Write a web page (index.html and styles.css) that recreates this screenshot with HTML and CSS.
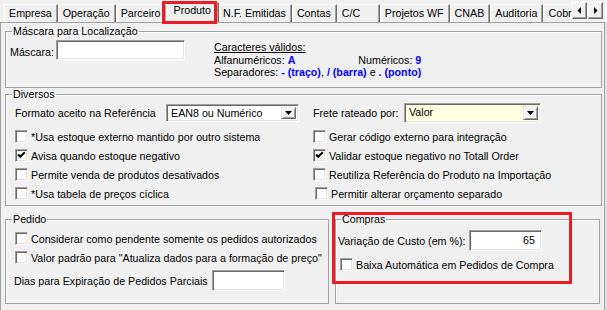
FILE: index.html
```html
<!DOCTYPE html>
<html lang="pt-BR">
<head>
    <meta charset="UTF-8">
    <title>Produto - Parâmetros</title>
    <link rel="stylesheet" href="styles.css">
</head>
<body>
    <div class="tabctl">
        <div class="tabbar">
            <div class="tabs">
                <span class="tab">Empresa</span>
                <span class="tab">Operação</span>
                <span class="tab">Parceiro</span>
                <span class="tab active">Produto</span>
                <span class="tab">N.F. Emitidas</span>
                <span class="tab">Contas</span>
                <span class="tab tab-cc">C/C</span>
                <span class="tab">Projetos WF</span>
                <span class="tab">CNAB</span>
                <span class="tab">Auditoria</span>
                <span class="tab">Cobrança</span>
            </div>
            <div class="scroll">
                <span class="sbtn">
                    <svg width="5" height="7" viewBox="0 0 5 7"><path d="M4 0 L4 7 L0.5 3.5 Z" fill="#000"/></svg>
                </span>
                <span class="sbtn">
                    <svg width="5" height="7" viewBox="0 0 5 7"><path d="M1 0 L1 7 L4.5 3.5 Z" fill="#000"/></svg>
                </span>
            </div>
        </div>

        <div class="page">
            <fieldset class="group mask">
                <legend>Máscara para Localização</legend>
                <div class="mask-row">
                    <label class="mask-label">Máscara:</label>
                    <span class="edit mask-edit"></span>
                    <div class="chars">
                        <div class="chars-title">Caracteres válidos:</div>
                        <div class="chars-line">
                            <span>Alfanuméricos: <b>A</b></span>
                            <span>Numéricos: <b>9</b></span>
                        </div>
                        <div>Separadores: <b>- (traço)</b>, <b>/ (barra)</b> e <b>. (ponto)</b></div>
                    </div>
                </div>
            </fieldset>

            <fieldset class="group misc">
                <legend>Diversos</legend>
                <div class="cols">
                    <div class="col col-left">
                        <div class="field-row">
                            <span class="lbl lbl-format">Formato aceito na Referência</span>
                            <span class="combo combo-format">
                                <span class="combo-text">EAN8 ou Numérico</span>
                                <span class="combo-btn"><svg width="7" height="4" viewBox="0 0 7 4"><path d="M0 0 H7 L3.5 4 Z" fill="#000"/></svg></span>
                            </span>
                        </div>
                        <div class="check-row"><span class="check"></span>*Usa estoque externo mantido por outro sistema</div>
                        <div class="check-row"><span class="check on"><svg width="11" height="11" viewBox="0 0 11 11"><path d="M2 4.5 L4.2 6.8 L8.8 2.2" fill="none" stroke="#000" stroke-width="2"/></svg></span>Avisa quando estoque negativo</div>
                        <div class="check-row"><span class="check"></span>Permite venda de produtos desativados</div>
                        <div class="check-row"><span class="check"></span>*Usa tabela de preços cíclica</div>
                    </div>
                    <div class="col col-right">
                        <div class="field-row">
                            <span class="lbl lbl-freight">Frete rateado por:</span>
                            <span class="combo combo-freight">
                                <span class="combo-text">Valor</span>
                                <span class="combo-btn"><svg width="7" height="4" viewBox="0 0 7 4"><path d="M0 0 H7 L3.5 4 Z" fill="#000"/></svg></span>
                            </span>
                        </div>
                        <div class="check-row"><span class="check"></span>Gerar código externo para integração</div>
                        <div class="check-row"><span class="check on"><svg width="11" height="11" viewBox="0 0 11 11"><path d="M2 4.5 L4.2 6.8 L8.8 2.2" fill="none" stroke="#000" stroke-width="2"/></svg></span>Validar estoque negativo no Totall Order</div>
                        <div class="check-row"><span class="check"></span>Reutiliza Referência do Produto na Importação</div>
                        <div class="check-row nudge"><span class="check"></span>Permitir alterar orçamento separado</div>
                    </div>
                </div>
            </fieldset>

            <div class="bottom">
                <fieldset class="group order">
                    <legend>Pedido</legend>
                    <div class="check-row"><span class="check"></span>Considerar como pendente somente os pedidos autorizados</div>
                    <div class="check-row"><span class="check"></span>Valor padrão para "Atualiza dados para a formação de preço"</div>
                    <div class="days-row">
                        <span class="lbl lbl-days">Dias para Expiração de Pedidos Parciais</span>
                        <span class="edit days-edit"></span>
                    </div>
                </fieldset>

                <fieldset class="group purchase">
                    <legend>Compras</legend>
                    <div class="cost-row">
                        <span class="lbl lbl-cost">Variação de Custo (em %):</span>
                        <span class="edit cost-edit">65</span>
                    </div>
                    <div class="check-row"><span class="check"></span>Baixa Automática em Pedidos de Compra</div>
                </fieldset>
            </div>
        </div>
    </div>

    <!-- highlight boxes drawn over the form -->
    <div class="mark mark-tab"></div>
    <div class="mark mark-purchase"></div>
</body>
</html>
```

FILE: styles.css
```css
:root {
    --face: #f0f0f0;
    --shadow: #a0a0a0;
    --dark: #696969;
    --light: #e3e3e3;
    --white: #ffffff;
    --blue: #0000ff;
    --mark: #ed1c24;
}

* {
    box-sizing: border-box;
}

body {
    margin: 0;
    width: 607px;
    height: 310px;
    overflow: hidden;
    position: relative;
    background-color: var(--white);
    font-family: "Liberation Sans", Arial, sans-serif;
    font-size: 10.7px;
    color: #000;
}

/* tab strip */
.tabctl {
    width: 605px;
    height: 310px;
    background-color: var(--face);
}

.tabbar {
    display: flex;
    height: 22px;
    padding-left: 4px;
}

.tabs {
    flex: 1;
    display: flex;
    align-items: flex-end;
    overflow: hidden;
    white-space: nowrap;
}

.tab {
    height: 18px;
    line-height: 16px;
    padding: 0 5px 0 4px;
    border-top: 1px solid var(--white);
    border-left: 1px solid var(--white);
    border-right: 1px solid var(--dark);
    box-shadow: inset -1px 0 0 var(--shadow);
    flex-shrink: 0;
}

.tab.active {
    height: 20px;
    line-height: 15px;
    margin: 0 -1px 0 -1px;
    padding: 0 7px;
    position: relative;
}

.tab-cc {
    width: 43px;
}

.scroll {
    display: flex;
    gap: 1px;
    padding: 2px 2px 0 0;
}

.sbtn {
    width: 15px;
    height: 17px;
    display: flex;
    align-items: center;
    justify-content: center;
    background-color: var(--face);
    border: 1px solid;
    border-color: var(--white) var(--dark) var(--dark) var(--white);
    box-shadow: inset -1px -1px 0 var(--shadow);
}

/* page */
.page {
    height: 288px;
    border-top: 1px solid var(--shadow);
    border-left: 1px solid var(--shadow);
    border-right: 1px solid var(--shadow);
    box-shadow: 2px 0 0 var(--light);
    padding: 2px 2px 0 4px;
}

fieldset.group {
    margin: 0;
    padding: 0;
    min-width: 0;
    border: 1px solid var(--shadow);
    box-shadow: inset 1px 1px 0 var(--white);
}

legend {
    padding: 0 1px;
    margin-left: 6px;
    line-height: 13px;
}

.lbl {
    white-space: nowrap;
    flex-shrink: 0;
}

/* mascara */
.mask {
    height: 63px;
}

.mask-row {
    display: flex;
    align-items: flex-start;
    padding: 2px 0 0 4px;
}

.mask-label {
    width: 46px;
    margin-top: 6px;
}

.edit {
    display: block;
    flex-shrink: 0;
    background-color: var(--white);
    border: 1px solid;
    border-color: var(--shadow) var(--white) var(--white) var(--shadow);
    box-shadow: inset 1px 1px 0 var(--dark), inset -1px -1px 0 var(--light);
}

.mask-edit {
    width: 129px;
    height: 20px;
}

.chars {
    margin-left: 29px;
    margin-top: 1px;
    line-height: 12.5px;
}

.chars-title {
    text-decoration: underline;
}

.chars-line {
    display: flex;
    justify-content: space-between;
}

.chars b {
    color: var(--blue);
}

/* diversos */
.misc {
    margin-top: 2px;
    height: 118px;
}

.cols {
    display: flex;
    padding: 2px 0 0 9px;
}

.col-left {
    width: 298px;
}

.field-row {
    display: flex;
    align-items: center;
    height: 20px;
    margin-bottom: 4px;
}

.lbl-format {
    width: 151px;
}

.lbl-freight {
    width: 91px;
}

.combo {
    display: flex;
    height: 19px;
    background-color: var(--white);
    border: 1px solid;
    border-color: var(--shadow) var(--white) var(--white) var(--shadow);
    box-shadow: inset 1px 1px 0 var(--dark), inset -1px -1px 0 var(--light);
    padding: 2px;
}

.combo-format {
    width: 133px;
    height: 18px;
}

.combo-freight {
    width: 137px;
    height: 20px;
    background-color: #ffffe1;
}

.combo-text {
    flex: 1;
    padding-left: 2px;
    line-height: 13px;
}

.combo-btn {
    width: 15px;
    display: flex;
    align-items: center;
    justify-content: center;
    background-color: var(--face);
    border: 1px solid;
    border-color: var(--light) var(--dark) var(--dark) var(--light);
    box-shadow: inset 1px 1px 0 var(--white), inset -1px -1px 0 var(--shadow);
}

.check-row {
    display: flex;
    align-items: center;
    height: 19px;
    white-space: nowrap;
}

.check {
    width: 13px;
    height: 13px;
    margin-right: 3px;
    flex-shrink: 0;
    display: flex;
    align-items: center;
    justify-content: center;
    background-color: var(--white);
    border: 1px solid;
    border-color: var(--shadow) var(--white) var(--white) var(--shadow);
    box-shadow: inset 1px 1px 0 var(--dark), inset -1px -1px 0 var(--light);
}

.nudge {
    margin-left: 2px;
}

/* pedido / compras */
.bottom {
    display: flex;
    margin-top: 7px;
}

fieldset.order {
    width: 324px;
    height: 91px;
    padding: 0 0 0 9px;
}

.order legend {
    margin-left: -3px;
}

.order .check-row:first-of-type {
    margin-top: 3px;
}

.days-row {
    display: flex;
    align-items: center;
    margin: 3px 0 0 -1px;
}

.lbl-days {
    width: 198px;
}

.days-edit {
    width: 73px;
    height: 21px;
}

fieldset.purchase {
    width: 265px;
    height: 91px;
    margin-left: 6px;
    padding: 0 0 0 2px;
}

.purchase legend {
    margin-left: 3px;
}

.cost-row {
    display: flex;
    align-items: center;
    margin-top: 4px;
}

.lbl-cost {
    width: 131px;
}

.cost-edit {
    width: 73px;
    height: 21px;
    text-align: right;
    padding: 3px 6px 0 0;
}

.purchase .check-row {
    margin: 4px 0 0 2px;
}

/* red highlight boxes */
.mark {
    position: absolute;
    border: 3px solid var(--mark);
}

.mark-tab {
    left: 162px;
    top: 1px;
    width: 55px;
    height: 23px;
}

.mark-purchase {
    left: 332px;
    top: 212px;
    width: 240px;
    height: 72px;
}
```
